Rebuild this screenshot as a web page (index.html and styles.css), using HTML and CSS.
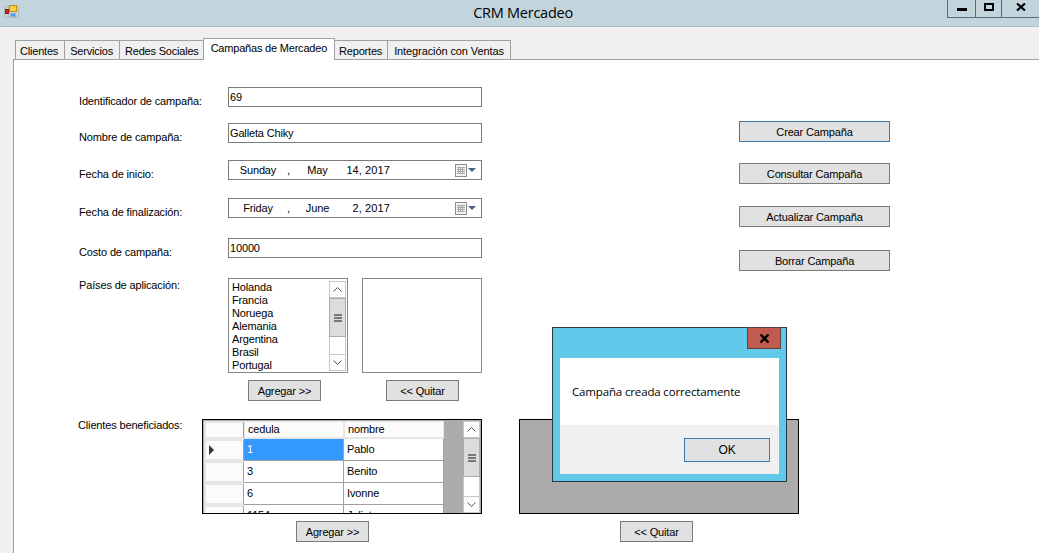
FILE: index.html
```html
<!DOCTYPE html>
<html lang="es">
<head>
    <meta charset="UTF-8">
    <title>CRM Mercadeo</title>
    <link rel="stylesheet" href="styles.css">
</head>
<body>
    <div class="window">
        <div class="titlebar">
            <svg class="app-icon" width="15" height="14" viewBox="0 0 15 14">
                <path d="M0.5 2.5H14.5M0.5 2.5V13.5H14.5V2.5M4.5 2.5V13.5" fill="none" stroke="#b4bcbc"/>
                <rect x="5.5" y="1.5" width="7" height="6" fill="#f6cf3e" stroke="#c08f18"/>
                <rect x="1.5" y="5.5" width="3" height="4" fill="#cc2027" stroke="#8c1a1c"/>
                <rect x="6.5" y="9.5" width="5" height="3" fill="#4f9bea" stroke="#8fb4de"/>
            </svg>
            <span class="title">CRM Mercadeo</span>
            <div class="controls">
                <div class="ctl ctl-min"><svg width="10" height="3" viewBox="0 0 10 3"><rect width="10" height="3" fill="#000"/></svg></div>
                <div class="ctl ctl-max"><svg width="10" height="8" viewBox="0 0 10 8"><rect x="1" y="1" width="8" height="6" fill="none" stroke="#000" stroke-width="2"/></svg></div>
                <div class="ctl ctl-close"><svg width="10" height="8" viewBox="0 0 10 8"><path d="M1 0.5 L9 7.5 M9 0.5 L1 7.5" stroke="#000" stroke-width="2.2" fill="none"/></svg></div>
            </div>
        </div>

        <div class="tabs">
            <div class="tab tab-clientes">Clientes</div>
            <div class="tab tab-servicios">Servicios</div>
            <div class="tab tab-redes">Redes Sociales</div>
            <div class="tab active">Campañas de Mercadeo</div>
            <div class="tab tab-reportes">Reportes</div>
            <div class="tab tab-ventas">Integración con Ventas</div>
        </div>

        <div class="panel">
            <div class="form-top">
                <div class="fields">
                    <div class="field h36">
                        <label>Identificador de campaña:</label>
                        <div class="input">69</div>
                    </div>
                    <div class="field h37">
                        <label>Nombre de campaña:</label>
                        <div class="input">Galleta Chiky</div>
                    </div>
                    <div class="field h38">
                        <label>Fecha de inicio:</label>
                        <div class="input date">
                            <span class="d-day">Sunday</span><span class="d-sep">,</span><span class="d-month">May</span><span class="d-num">14, 2017</span>
                            <svg class="cal" width="26" height="14" viewBox="0 0 26 14">
                                <rect x="0.5" y="1.5" width="11" height="12" fill="#f4f4f4" stroke="#8c8c8c"/>
                                <path d="M2 4.5H10M2 6.5H10M2 8.5H10M2 10.5H10M3.5 4V11M5.5 4V11M7.5 4V11" stroke="#a8a8a8"/>
                                <path d="M13 5H21L17 9Z" fill="#4d6185"/>
                            </svg>
                        </div>
                    </div>
                    <div class="field h40">
                        <label>Fecha de finalización:</label>
                        <div class="input date">
                            <span class="d-day">Friday</span><span class="d-sep">,</span><span class="d-month">June</span><span class="d-num">2, 2017</span>
                            <svg class="cal" width="26" height="14" viewBox="0 0 26 14">
                                <rect x="0.5" y="1.5" width="11" height="12" fill="#f4f4f4" stroke="#8c8c8c"/>
                                <path d="M2 4.5H10M2 6.5H10M2 8.5H10M2 10.5H10M3.5 4V11M5.5 4V11M7.5 4V11" stroke="#a8a8a8"/>
                                <path d="M13 5H21L17 9Z" fill="#4d6185"/>
                            </svg>
                        </div>
                    </div>
                    <div class="field h40">
                        <label>Costo de campaña:</label>
                        <div class="input">10000</div>
                    </div>
                    <div class="field">
                        <label class="label-top">Países de aplicación:</label>
                        <div class="lists">
                            <div class="list-col">
                                <div class="listbox">
                                    <ul class="items">
                                        <li>Holanda</li>
                                        <li>Francia</li>
                                        <li>Noruega</li>
                                        <li>Alemania</li>
                                        <li>Argentina</li>
                                        <li>Brasil</li>
                                        <li>Portugal</li>
                                    </ul>
                                    <div class="scrollbar">
                                        <div class="sb-btn"><svg width="9" height="5" viewBox="0 0 9 5"><path d="M0.5 4.5L4.5 0.5L8.5 4.5" fill="none" stroke="#555"/></svg></div>
                                        <div class="sb-thumb"><i></i><i></i><i></i></div>
                                        <div class="sb-track"></div>
                                        <div class="sb-btn"><svg width="9" height="5" viewBox="0 0 9 5"><path d="M0.5 0.5L4.5 4.5L8.5 0.5" fill="none" stroke="#555"/></svg></div>
                                    </div>
                                </div>
                                <button class="btn btn-small add-list">Agregar &gt;&gt;</button>
                            </div>
                            <div class="list-col">
                                <div class="listbox"></div>
                                <button class="btn btn-small del-list">&lt;&lt; Quitar</button>
                            </div>
                        </div>
                    </div>
                </div>
                <div class="actions">
                    <button class="btn btn-wide btn-default">Crear Campaña</button>
                    <button class="btn btn-wide">Consultar Campaña</button>
                    <button class="btn btn-wide">Actualizar Campaña</button>
                    <button class="btn btn-wide">Borrar Campaña</button>
                </div>
            </div>

            <div class="form-bottom">
                <label class="clients-label">Clientes beneficiados:</label>
                <div class="grid-col">
                    <div class="datagrid">
                        <div class="dg-cells">
                            <div class="dg-row dg-head">
                                <div class="rh"></div><div class="hc">cedula</div><div class="hc">nombre</div>
                            </div>
                            <div class="dg-row">
                                <div class="rh"><svg width="7" height="10" viewBox="0 0 7 10"><path d="M1 0V10L6 5Z" fill="#333"/></svg></div><div class="dc selected">1</div><div class="dc">Pablo</div>
                            </div>
                            <div class="dg-row">
                                <div class="rh"></div><div class="dc">3</div><div class="dc">Benito</div>
                            </div>
                            <div class="dg-row">
                                <div class="rh"></div><div class="dc">6</div><div class="dc">Ivonne</div>
                            </div>
                            <div class="dg-row">
                                <div class="rh"></div><div class="dc">1154</div><div class="dc">Julieta</div>
                            </div>
                        </div>
                        <div class="scrollbar">
                            <div class="sb-btn"><svg width="9" height="5" viewBox="0 0 9 5"><path d="M0.5 4.5L4.5 0.5L8.5 4.5" fill="none" stroke="#555"/></svg></div>
                            <div class="sb-thumb"><i></i><i></i><i></i></div>
                            <div class="sb-track"></div>
                            <div class="sb-btn"><svg width="9" height="5" viewBox="0 0 9 5"><path d="M0.5 0.5L4.5 4.5L8.5 0.5" fill="none" stroke="#555"/></svg></div>
                        </div>
                    </div>
                    <button class="btn btn-small add-grid">Agregar &gt;&gt;</button>
                </div>
                <div class="grid-col empty-col">
                    <div class="datagrid"></div>
                    <button class="btn btn-small del-grid">&lt;&lt; Quitar</button>
                </div>
            </div>
        </div>

        <div class="dialog">
            <div class="dialog-head">
                <div class="dialog-close"><svg width="11" height="9" viewBox="0 0 11 9"><path d="M1.5 0.5 L9.5 8.5 M9.5 0.5 L1.5 8.5" stroke="#000" stroke-width="2.4" fill="none"/></svg></div>
            </div>
            <div class="dialog-body">
                <div class="dialog-msg">Campaña creada correctamente</div>
                <div class="dialog-foot"><button class="btn btn-ok">OK</button></div>
            </div>
        </div>
    </div>
</body>
</html>
```

FILE: styles.css
```css
* {
    box-sizing: border-box;
    margin: 0;
    padding: 0;
}

body {
    font-family: "Liberation Sans", Arial, sans-serif;
    font-size: 11px;
    letter-spacing: -0.15px;
    color: #000;
    background: #f0f0f0;
    overflow: hidden;
}

.window {
    position: relative;
    display: flex;
    flex-direction: column;
    height: 553px;
    overflow: hidden;
}

/* title bar */
.titlebar {
    position: relative;
    flex: none;
    height: 27px;
    padding-left: 7px;
    background: #c3d5dc;
    border-bottom: 1px solid #aebfc8;
    text-align: center;
}

.app-icon {
    position: absolute;
    left: 4px;
    top: 4px;
}

.title {
    font-family: "Open Sans", sans-serif;
    font-size: 14.5px;
    letter-spacing: -0.25px;
    line-height: 25px;
}

.controls {
    position: absolute;
    right: 0;
    top: 0;
    display: flex;
    height: 18px;
    border-left: 1px solid #5c6b72;
    border-bottom: 1px solid #5c6b72;
}

.ctl {
    display: flex;
    justify-content: center;
    height: 17px;
}

.ctl-min {
    width: 28px;
    padding-top: 8px;
    border-right: 1px solid #5c6b72;
}

.ctl-max {
    width: 26px;
    padding-top: 3px;
    border-right: 1px solid #5c6b72;
}

.ctl-close {
    width: 37px;
    padding-top: 3px;
}

/* tabs */
.tabs {
    flex: none;
    display: flex;
    align-items: flex-end;
    height: 33px;
    padding-left: 15px;
    position: relative;
    z-index: 1;
    margin-bottom: -1px;
}

.tab {
    height: 19px;
    padding: 0 5px;
    line-height: 21px;
    letter-spacing: -0.2px;
    background: #f0f0f0;
    border: 1px solid #a0a0a0;
    border-bottom: none;
    margin-left: -1px;
    margin-bottom: 1px;
}

.tab-clientes {
    margin-left: 0;
    padding: 0 6px 0 4px;
}

.tab-servicios { padding-right: 6px; }
.tab-redes { padding-right: 4px; }
.tab-reportes { padding-left: 4px; }

.tab-ventas {
    padding: 0 6px;
    letter-spacing: -0.1px;
}

.tab.active {
    height: 22px;
    padding: 0 7px;
    line-height: 19px;
    background: #fff;
    margin-bottom: 0;
}

/* panel */
.panel {
    flex: 1;
    margin-left: 13px;
    background: #fff;
    border-left: 1px solid #a0a0a0;
    border-top: 1px solid #a0a0a0;
    padding-top: 27px;
}

.form-top {
    display: flex;
    height: 332px;
}

.fields {
    width: 468px;
    padding-left: 65px;
}

.field {
    display: grid;
    grid-template-columns: 149px 254px;
}

.h36 { height: 36px; }
.h37 { height: 37px; }
.h38 { height: 38px; }
.h40 { height: 40px; }

label {
    padding-top: 8px;
}

.label-top {
    padding-top: 1px;
}

.input {
    height: 20px;
    padding: 1px;
    line-height: 16px;
    background: #fff;
    border: 1px solid #7a7a7a;
}

.date {
    display: grid;
    grid-template-columns: 58px 10px 41px 52px 1fr;
    padding: 1px 0 0;
}

.d-day,
.d-month {
    text-align: center;
}

.d-num {
    text-align: right;
    letter-spacing: 0.1px;
}

.cal {
    justify-self: end;
    margin-top: 1px;
}

.lists {
    display: flex;
    gap: 14px;
}

.list-col {
    display: flex;
    flex-direction: column;
    gap: 7px;
}

.add-list { margin-left: 20px; }
.del-list { margin-left: 24px; }
.add-grid { margin-left: 94px; }
.del-grid { margin-left: 101px; }

.listbox {
    display: flex;
    width: 120px;
    height: 95px;
    padding: 2px 1px 0 3px;
    background: #fff;
    border: 1px solid #828790;
    overflow: hidden;
}

.items {
    flex: 1;
    list-style: none;
}

.items li {
    height: 13px;
    line-height: 13px;
}

.scrollbar {
    flex: none;
    display: flex;
    flex-direction: column;
    width: 17px;
    margin: 0 0 1px;
    background: #fff;
}

.sb-btn {
    flex: none;
    display: flex;
    align-items: center;
    justify-content: center;
    height: 17px;
    border: 1px solid #c8c8c8;
    background: #fdfdfd;
}

.sb-thumb {
    flex: none;
    display: flex;
    flex-direction: column;
    align-items: center;
    justify-content: center;
    gap: 1px;
    height: 39px;
    background: #dcdcdc;
    border: 1px solid #acacac;
}

.sb-thumb i {
    display: block;
    width: 8px;
    height: 2px;
    background: #777;
}

.sb-track {
    flex: 1;
    background: #fff;
    border-left: 1px solid #c8c8c8;
    border-right: 1px solid #c8c8c8;
}

/* buttons */
.btn {
    display: block;
    font-family: "Liberation Sans", Arial, sans-serif;
    font-size: 11px;
    letter-spacing: -0.15px;
    color: #000;
    background: #e1e1e1;
    border: 1px solid #7a7a7a;
}

.btn-small {
    width: 73px;
    height: 21px;
}

.btn-wide {
    width: 151px;
    height: 21px;
}

.btn-default {
    border-color: #3e7bad;
}

.actions {
    display: flex;
    flex-direction: column;
    margin-left: 257px;
    padding-top: 34px;
}

.actions .btn:nth-child(2) { margin-top: 21px; }
.actions .btn:nth-child(3) { margin-top: 22px; }
.actions .btn:nth-child(4) { margin-top: 23px; }

/* bottom grids */
.form-bottom {
    display: flex;
}

.clients-label {
    width: 124px;
    margin-left: 64px;
    padding-top: 0;
    line-height: 13px;
}

.grid-col {
    display: flex;
    flex-direction: column;
    gap: 7px;
}

.empty-col {
    margin-left: 37px;
}

.datagrid {
    display: flex;
    width: 280px;
    height: 95px;
    padding: 1px 1px 0;
    background: #ababab;
    border: 1px solid #000;
    overflow: hidden;
}

.dg-cells {
    flex: 1;
    overflow: hidden;
}

.dg-row {
    display: grid;
    grid-template-columns: 40px 100px 100px;
    height: 22px;
}

.dg-head {
    height: 18px;
}

.rh {
    display: flex;
    align-items: center;
    padding-left: 2px;
    background: #fbfbfb;
    border: 2px solid #e6e6e6;
    border-right-color: #a0a0a0;
    border-right-width: 1px;
}

.hc {
    padding-left: 3px;
    line-height: 15px;
    background: #fbfbfb;
    border: 2px solid #e6e6e6;
    border-width: 1px 1px 2px;
}

.dc {
    padding-left: 3px;
    line-height: 21px;
    background: #fff;
    border-right: 1px solid #a0a0a0;
    border-bottom: 1px solid #a0a0a0;
}

.dc.selected {
    background: #3399ff;
    color: #fff;
}

.datagrid .scrollbar {
    margin: 0;
}

/* message box */
.dialog {
    position: absolute;
    left: 552px;
    top: 327px;
    width: 235px;
    height: 155px;
    padding: 0 7px 7px;
    background: #62c8ea;
    border: 1px solid #2f3a40;
    display: flex;
    flex-direction: column;
}

.dialog-head {
    flex: none;
    height: 30px;
}

.dialog-close {
    position: absolute;
    right: 5px;
    top: -1px;
    display: flex;
    align-items: center;
    justify-content: center;
    width: 34px;
    height: 22px;
    background: #c15b4f;
    border: 1px solid #5a4440;
}

.dialog-body {
    flex: 1;
    display: flex;
    flex-direction: column;
    background: #fff;
}

.dialog-msg {
    flex: 1;
    padding: 26px 0 0 12px;
    font-family: "Open Sans", sans-serif;
    font-size: 11.5px;
    letter-spacing: -0.15px;
}

.dialog-foot {
    display: flex;
    justify-content: flex-end;
    height: 49px;
    padding: 13px 9px 0 0;
    background: #f0f0f0;
}

.btn-ok {
    width: 86px;
    height: 24px;
    border-color: #3e7bad;
    font-size: 12px;
}
```
